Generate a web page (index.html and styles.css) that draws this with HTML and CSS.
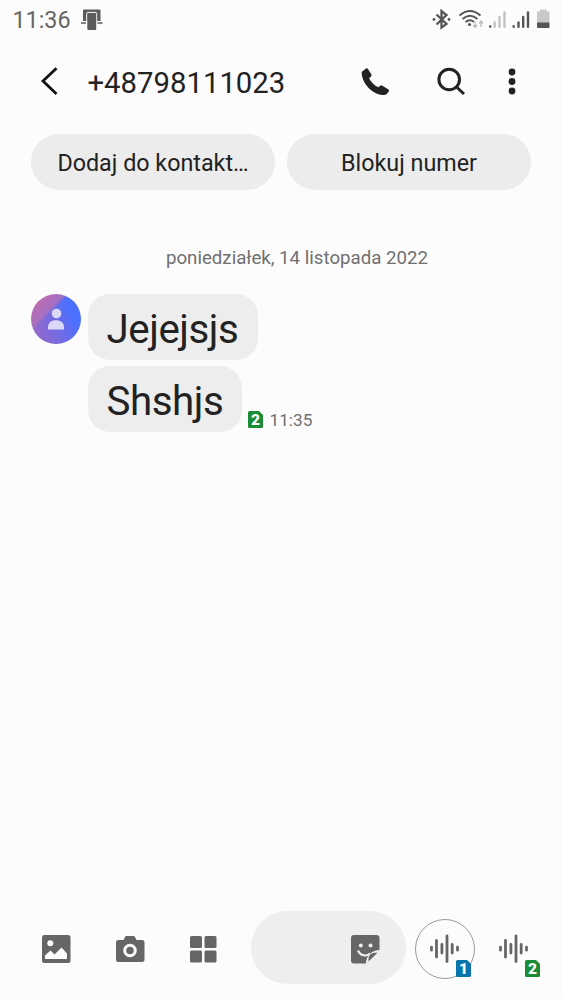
FILE: index.html
```html
<!DOCTYPE html>
<html lang="pl">
<head>
<meta charset="utf-8">
<title>+48798111023</title>
<link rel="stylesheet" href="styles.css">
</head>
<body>
<div class="phone">
  <div class="status">
    <span class="clock">11:36</span>
    <svg class="notice" width="22" height="22" viewBox="0 0 22 22"><path d="M2 12V1.500Q2 .5 3 .5H18.500Q19.500 .5 19.500 1.500V12H15.500V4.500H6.500V12Z" fill="#5c5c5c"/><path d="M0 14H5M16.500 14H21.500" stroke="#5c5c5c" stroke-width="1.700"/><path d="M5.700 14V4.800Q5.700 3.400 7 3.400H14.300Q15.700 3.400 15.700 4.800V14" fill="none" stroke="#fcfcfc" stroke-width="1"/><rect x="6.300" y="4" width="8.900" height="17" rx="1" fill="#5c5c5c"/></svg>
    <svg class="signals" width="120" height="22" viewBox="0 0 120 22">
      <g fill="none" stroke="#555" stroke-width="2.300"><path d="M4.500 5.500L14.500 14.800L9.500 18.500V2L14.500 6L4.500 15.500"/><path d="M27.500 6.500Q38 -2.500 48.500 6.500M30.500 10Q38 3.500 45.500 10M33.500 13Q38 9.500 42 13" stroke-width="1.900"/></g>
      <circle cx="2" cy="10.500" r="1.400" fill="#555"/><circle cx="17" cy="10.500" r="1.400" fill="#555"/><circle cx="37.500" cy="15.500" r="1.600" fill="#555"/>
      <path d="M43.200 12.500V18M41.200 16L43.200 18.500L45.200 16M49 18V12.500M47 14.500L49 12L51 14.500" fill="none" stroke="#bbb" stroke-width="1.300"/>
      <g stroke-width="2.400" stroke-linecap="round"><path d="M58.200 17.300V17.800" stroke="#666"/><path d="M62.700 13.500V17.800M67.500 8V17.800M72.500 3.500V17.800" stroke="#c3c3c3"/><path d="M81.700 17.300V17.800M86.500 13.500V17.800M91.200 8V17.800M96 3.500V17.800" stroke="#555"/></g>
      <path d="M105 3.500Q105 2.500 106 2.500H108V.5H114.500V2.500H116.500Q117.500 2.500 117.500 3.500V14H105Z" fill="#c8c8c8"/><path d="M105 13.500H117.500V18Q117.500 19 116.500 19H106Q105 19 105 18Z" fill="#555"/>
    </svg>
  </div>
  <header class="bar">
    <svg class="back" width="20" height="32" viewBox="0 0 20 32"><path d="M16.500 2.300L3 15.100L16.500 28.100" fill="none" stroke="#111" stroke-width="2.800"/></svg>
    <h1 class="number">+48798111023</h1>
    <svg class="call" width="30" height="30" viewBox="0 0 30 30"><path d="M1.200 4.500L5 1.600Q6.300 .9 7.100 2.200L10.300 7.300Q10.900 8.500 10 9.400L8.100 11.200C9.800 14.900 13.500 18.400 17.300 20.300L19.200 18.700Q20.200 17.900 21.400 18.700L27.500 22.600Q28.600 23.500 27.800 24.600L25.700 27Q24.500 28.300 21.700 28C10.500 27.200 1.300 15.800 .7 6.500Q.6 5.200 1.200 4.500Z" fill="#222"/></svg>
    <svg class="find" width="30" height="30" viewBox="0 0 30 30"><g fill="none" stroke="#222" stroke-width="3"><circle cx="12.200" cy="12.500" r="10.300"/><path d="M19.500 20L27 27"/></g></svg>
    <svg class="more" width="8" height="28" viewBox="0 0 8 28"><g fill="#222"><circle cx="4" cy="4" r="3.400"/><circle cx="4" cy="13.500" r="3.400"/><circle cx="4" cy="23" r="3.400"/></g></svg>
  </header>
  <div class="actions">
    <button class="pill">Dodaj do kontakt…</button>
    <button class="pill">Blokuj numer</button>
  </div>
  <main class="thread">
    <p class="date">poniedziałek, 14 listopada 2022</p>
    <div class="messages">
      <div class="avatar"><svg width="50" height="50" viewBox="0 0 50 50"><circle cx="25.500" cy="19.500" r="4.800"/><path d="M17 35.500V33.500C17 28.500 20.500 26.300 25 26.300S33 28.500 33 33.500V35.500Z"/></svg></div>
      <div class="bubbles">
        <div class="bubble first">Jejejsjs</div>
        <div class="row">
          <div class="bubble second">Shshjs</div>
          <span class="sim green small">2</span>
          <span class="sent">11:35</span>
        </div>
      </div>
    </div>
  </main>
  <footer class="composer">
    <svg class="photo" width="30" height="30" viewBox="0 0 30 30"><rect x="1" y="1" width="28.500" height="28" rx="2.500" fill="#666"/><circle cx="9.300" cy="9.300" r="3" fill="#fcfcfc"/><path d="M4 25V21.500L9.500 16.500L13.500 20.500L20.500 13.500L26 19.500V25Z" fill="#fcfcfc"/></svg>
    <svg class="camera" width="30" height="30" viewBox="0 0 30 30"><path d="M3 6H8.500L10 3Q10.500 2 11.500 2H18.500Q19.500 2 20 3L21.500 6H27Q29.500 6 29.500 8.500V25.500Q29.500 28 27 28H3.500Q1 28 1 25.500V8.500Q1 6 3.500 6Z" fill="#666"/><circle cx="15" cy="16.500" r="5.300" fill="#666" stroke="#fcfcfc" stroke-width="3"/></svg>
    <svg class="apps" width="28" height="28" viewBox="0 0 28 28"><g fill="#666"><rect x="1" y="1" width="12" height="12" rx="1.500"/><rect x="15.500" y="1" width="12" height="12" rx="1.500"/><rect x="1" y="15.500" width="12" height="12" rx="1.500"/><rect x="15.500" y="15.500" width="12" height="12" rx="1.500"/></g></svg>
    <div class="field"><svg width="30" height="30" viewBox="0 0 30 30"><path d="M4 1H26.500Q29.500 1 29.500 4V16C22 16 16 21.500 16 29.500H4Q1 29.500 1 26.500V4Q1 1 4 1Z" fill="#666"/><circle cx="10.800" cy="11.500" r="2" fill="#eee"/><circle cx="20.500" cy="11.500" r="2" fill="#eee"/><path d="M8 16.500Q10 21.500 15.500 21.500Q18 21.500 20 19.500" fill="none" stroke="#eee" stroke-width="2.200"/><path d="M18.500 27.500V25.500Q18.500 19 25 18.800H27.500Z" fill="#666"/></svg></div>
    <div class="voice active">
      <svg width="32" height="30" viewBox="0 0 32 30"><path d="M2.500 13.200V16.200M7.500 6.500V23M12.900 10.500V19M18 2V27.500M23.200 10.500V19M28.500 13.200V16.200" fill="none" stroke="#666" stroke-width="2.800" stroke-linecap="round"/></svg>
      <span class="sim blue">1</span>
    </div>
    <div class="voice plain">
      <svg width="32" height="30" viewBox="0 0 32 30"><path d="M2.500 13.200V16.200M7.500 6.500V23M12.900 10.500V19M18 2V27.500M23.200 10.500V19M28.500 13.200V16.200" fill="none" stroke="#666" stroke-width="2.800" stroke-linecap="round"/></svg>
      <span class="sim green">2</span>
    </div>
  </footer>
</div>
</body>
</html>
```
FILE: styles.css
```css
* { box-sizing: border-box; }
body { margin: 0; background: #fcfcfc; color: #222; font-family: Roboto, sans-serif; }
svg { display: block; flex: none; }
.phone { width: 562px; height: 999px; display: flex; flex-direction: column; overflow: hidden; }
.status { height: 40px; display: flex; align-items: flex-start; padding: 9px 10.500px 0 12.500px; }
.clock { width: 68.500px; font-size: 23.300px; line-height: 22px; color: #666; }
.signals { margin-left: auto; }
.bar { height: 84px; display: flex; align-items: center; padding: 0 46px 1px 40px; }
.number { margin: 2px 0 0 27.500px; width: 273px; font-size: 29.300px; font-weight: 400; line-height: 36px; }
.find { margin-left: 46px; }
.more { margin-left: 41px; }
.actions { display: flex; gap: 12px; padding: 10.400px 31px 0; }
.pill { flex: 1; height: 56px; border: 0; border-radius: 28px; background: #ececec; color: #222; font: 400 23.300px/56px Roboto, sans-serif; padding: 1px 0 0; white-space: nowrap; }
.thread { flex: 1; padding: 54.600px 31px 0; }
.date { margin: 0 0 0 32px; text-align: center; font-size: 18.700px; line-height: 26px; color: #707070; }
.messages { display: flex; gap: 6.500px; margin-top: 23px; }
.avatar { width: 50px; height: 50px; border-radius: 50%; background: linear-gradient(135deg, #bc6bb2 0 14%, rgba(174, 113, 188, .85) 34%, transparent 39%), linear-gradient(65deg, #9169cd 15%, #766be0 42%, #4c70ff 75%); }
.avatar svg { fill: #dcd9f8; }
.bubbles { display: flex; flex-direction: column; align-items: flex-start; gap: 6px; }
.bubble { height: 66px; border-radius: 22px; background: #ededed; padding: 3px 0 0 19px; font-size: 40.300px; line-height: 66px; letter-spacing: -.45px; }
.first { width: 170px; }
.second { width: 154.500px; }
.row { display: flex; align-items: flex-end; }
.sent { margin: 0 0 2px 6.500px; font-size: 17.200px; line-height: 20px; color: #707070; }
.sim { width: 15px; height: 17px; border-radius: 1.500px; color: #fff; font-size: 15.500px; font-weight: 900; line-height: 18px; text-align: center; clip-path: polygon(0 0, 11px 0, 100% 4px, 100% 100%, 0 100%); }
.green { background: #198c35; }
.blue { background: #0875ad; }
.small { margin: 0 0 4px 6px; }
.composer { height: 100px; display: flex; align-items: center; padding-left: 41px; }
.camera { margin-left: 44px; }
.apps { margin-left: 44px; }
.field { width: 155px; height: 73px; margin: -4px 0 0 34px; border-radius: 37px; background: #eee; display: flex; align-items: center; justify-content: flex-end; padding: 3px 26px 0 0; }
.voice { position: relative; flex: none; width: 60px; height: 60px; display: flex; align-items: center; justify-content: center; }
.active { margin-left: 9px; }
.active::before { content: ""; position: absolute; inset: 0; border: 1.500px solid #999; border-radius: 50%; }
.plain { margin-left: 9px; }
.voice .sim { position: absolute; left: 41px; top: 41px; }
```
